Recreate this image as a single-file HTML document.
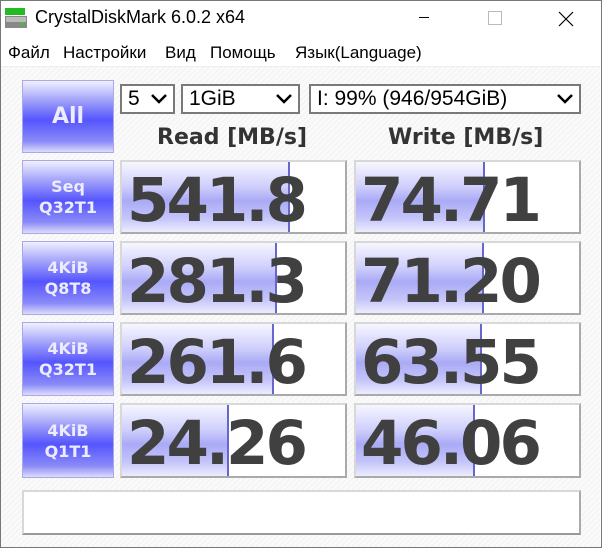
<!DOCTYPE html>
<html><head><meta charset="utf-8"><style>
*{margin:0;padding:0;box-sizing:border-box}
body{width:602px;height:548px;background:#fff;font-family:"Liberation Sans","DejaVu Sans",sans-serif;position:relative;overflow:hidden}
.win{position:absolute;left:0;top:0;width:602px;height:548px;border:1px solid #777;}
.title{position:absolute;left:35px;top:7px;font-size:18px;color:#000}
.menu{position:absolute;top:43px;font-size:17px;color:#000}
.content{position:absolute;left:1px;top:66px;width:599px;height:481px;background:repeating-linear-gradient(135deg,#fafafa 0 3px,#f2f2f2 3px 4px);border-top:1px solid #eee}
.btn{position:absolute;left:22px;width:92px;border:1px solid #aaa8e8;background:linear-gradient(#f0f0ff 0%,#9a9afa 30%,#5555ff 55%,#8a8af8 85%,#dcdcfc 100%);color:#ececfc;font-family:"DejaVu Sans",sans-serif;font-weight:bold;text-align:center;display:flex;align-items:center;justify-content:center;flex-direction:column}
.lbl{font-size:16px;line-height:21px}
.box{position:absolute;width:227px;height:74px;background:#fff;border:2px solid #d8d8d8;border-right-color:#aaa;border-bottom-color:#aaa;overflow:hidden}
.bar{position:absolute;left:0;top:0;bottom:0;background:linear-gradient(#f6f6ff 0%,#cfcffc 35%,#aaaaf6 55%,#c4c4fa 80%,#ececfe 100%);border-right:2px solid #6666cc}
.val{position:absolute;left:5px;top:4px;font-family:"DejaVu Sans",sans-serif;font-weight:bold;font-size:61px;letter-spacing:-3px;color:#404040;line-height:70px}
.sel{position:absolute;top:84px;height:30px;border:2px solid #7a7a7a;background:#fff;font-size:21px;line-height:25px;padding-left:6px;color:#000}
.sel svg{position:absolute;right:6px;top:8px}
.hdr{position:absolute;top:125px;font-family:"DejaVu Sans",sans-serif;font-weight:bold;font-size:22px;color:#333}
</style></head><body>
<div class="win"></div>
<svg style="position:absolute;left:4px;top:6px" width="24" height="24"><rect x="1" y="2" width="20" height="7" fill="#22bb22"/><rect x="1" y="10" width="22" height="12" fill="#888"/><rect x="2" y="11" width="20" height="5" fill="#bbb"/><rect x="17" y="16" width="3" height="3" fill="#3c3"/></svg>
<div class="title">CrystalDiskMark 6.0.2 x64</div>
<div style="position:absolute;left:419px;top:17px;width:10px;height:1px;background:#000"></div>
<div style="position:absolute;left:488px;top:11px;width:14px;height:14px;border:1px solid #bbb"></div>
<svg style="position:absolute;left:558px;top:11px" width="16" height="16"><path d="M1 1L15 15M15 1L1 15" stroke="#000" stroke-width="1.2"/></svg>
<div class="menu" style="left:8px">Файл</div>
<div class="menu" style="left:63px">Настройки</div>
<div class="menu" style="left:165px">Вид</div>
<div class="menu" style="left:210px">Помощь</div>
<div class="menu" style="left:295px">Язык(Language)</div>
<div class="content"></div>
<div class="btn" style="top:80px;height:73px;font-size:22px">All</div>
<div class="sel" style="left:120px;width:55px">5<svg width="16" height="10"><path d="M1 1L8 8L15 1" stroke="#000" stroke-width="2.5" fill="none"/></svg></div>
<div class="sel" style="left:181px;width:119px">1GiB<svg width="16" height="10"><path d="M1 1L8 8L15 1" stroke="#000" stroke-width="2.5" fill="none"/></svg></div>
<div class="sel" style="left:309px;width:272px">I: 99% (946/954GiB)<svg width="16" height="10"><path d="M1 1L8 8L15 1" stroke="#000" stroke-width="2.5" fill="none"/></svg></div>
<div class="hdr" style="left:157px">Read [MB/s]</div>
<div class="hdr" style="left:388px">Write [MB/s]</div>

<div class="btn" style="top:160px;height:74px"><span class="lbl">Seq</span><span class="lbl">Q32T1</span></div>
<div class="box" style="left:120px;top:160px"><div class="bar" style="width:168px"></div><div class="val">541.8</div></div>
<div class="box" style="left:354px;top:160px"><div class="bar" style="width:129px"></div><div class="val">74.71</div></div>

<div class="btn" style="top:241px;height:74px"><span class="lbl">4KiB</span><span class="lbl">Q8T8</span></div>
<div class="box" style="left:120px;top:241px"><div class="bar" style="width:155px"></div><div class="val">281.3</div></div>
<div class="box" style="left:354px;top:241px"><div class="bar" style="width:128px"></div><div class="val">71.20</div></div>

<div class="btn" style="top:322px;height:74px"><span class="lbl">4KiB</span><span class="lbl">Q32T1</span></div>
<div class="box" style="left:120px;top:322px"><div class="bar" style="width:152px"></div><div class="val">261.6</div></div>
<div class="box" style="left:354px;top:322px"><div class="bar" style="width:126px"></div><div class="val">63.55</div></div>

<div class="btn" style="top:403px;height:75px"><span class="lbl">4KiB</span><span class="lbl">Q1T1</span></div>
<div class="box" style="left:120px;top:403px;height:75px"><div class="bar" style="width:107px"></div><div class="val">24.26</div></div>
<div class="box" style="left:354px;top:403px;height:75px"><div class="bar" style="width:119px"></div><div class="val">46.06</div></div>

<div style="position:absolute;left:22px;top:490px;width:559px;height:45px;background:#fff;border:2px solid #d8d8d8;border-right-color:#aaa;border-bottom-color:#999"></div>
</body></html>
